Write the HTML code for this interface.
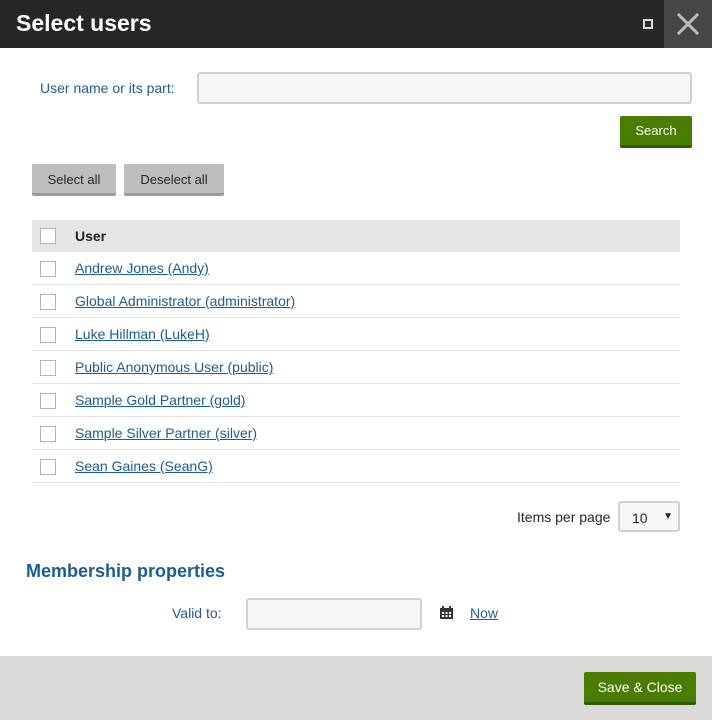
<!DOCTYPE html>
<html><head><style>
*{box-sizing:border-box;margin:0;padding:0}
body{width:712px;height:720px;position:relative;background:#fff;font-family:"Liberation Sans",sans-serif;font-size:14px;color:#262524;overflow:hidden}
.a{position:absolute}
.hdr{left:0;top:0;width:712px;height:48px;background:#272624}
.btn{position:absolute;text-align:center;border-radius:2px;font-size:13px}
.g{background:#497c00;color:#fff;border-bottom:3px solid #345a00}
.gr{background:#bebdbd;color:#262524;border-bottom:3px solid #9a9a9a}
.cb{position:absolute;left:40px;width:16px;height:16px;border:1px solid #b5b5b5;background:#fff}
.row{position:absolute;left:32px;width:648px;height:33px;border-bottom:1px solid #e2e2e2}
.row a{position:absolute;left:43px;top:8px;color:#1d5c8e;text-decoration:underline}
.row .cb{left:8px;top:9px}
</style></head><body>
<div class="a hdr"></div>
<div class="a" style="left:16px;top:10px;color:#fff;font-size:23px;font-weight:bold">Select users</div>
<div class="a" style="left:643px;top:19px;width:10px;height:10px;border:2px solid #ddd"></div>
<div class="a" style="left:664px;top:0;width:48px;height:48px;background:#474646"></div>
<svg class="a" style="left:677px;top:13px" width="22" height="22"><path d="M1 1L21 21M21 1L1 21" stroke="#bbb" stroke-width="3"/></svg>
<div class="a" style="left:40px;top:80px;color:#1d5c8e">User name or its part:</div>
<div class="a" style="left:197px;top:72px;width:495px;height:32px;border:2px solid #d0d0d0;border-radius:3px;background:#f6f6f6"></div>
<div class="btn g" style="left:620px;top:116px;width:72px;height:32px;line-height:30px">Search</div>
<div class="btn gr" style="left:32px;top:164px;width:84px;height:32px;line-height:31px">Select all</div>
<div class="btn gr" style="left:124px;top:164px;width:100px;height:32px;line-height:31px">Deselect all</div>
<div class="a" style="left:32px;top:220px;width:648px;height:32px;background:#e5e5e5"></div>
<div class="cb" style="top:228px"></div>
<div class="a" style="left:75px;top:228px;font-weight:bold">User</div>
<div class="row" style="top:252px"><div class="cb"></div><a>Andrew Jones (Andy)</a></div>
<div class="row" style="top:285px"><div class="cb"></div><a>Global Administrator (administrator)</a></div>
<div class="row" style="top:318px"><div class="cb"></div><a>Luke Hillman (LukeH)</a></div>
<div class="row" style="top:351px"><div class="cb"></div><a>Public Anonymous User (public)</a></div>
<div class="row" style="top:384px"><div class="cb"></div><a>Sample Gold Partner (gold)</a></div>
<div class="row" style="top:417px"><div class="cb"></div><a>Sample Silver Partner (silver)</a></div>
<div class="row" style="top:450px"><div class="cb"></div><a>Sean Gaines (SeanG)</a></div>
<div class="a" style="left:517px;top:509px">Items per page</div>
<div class="a" style="left:618px;top:501px;width:62px;height:31px;border:2px solid #d0d0d0;border-radius:3px;background:#f6f6f6;padding:7px 0 0 12px">10<span style="position:absolute;right:5px;top:8px;font-size:10px">▼</span></div>
<div class="a" style="left:26px;top:561px;font-size:18px;font-weight:bold;color:#1d5c8e">Membership properties</div>
<div class="a" style="left:172px;top:605px;color:#1d5c8e">Valid to:</div>
<div class="a" style="left:246px;top:598px;width:176px;height:32px;border:2px solid #d0d0d0;border-radius:3px;background:#f6f6f6"></div>
<svg class="a" style="left:439px;top:605px" width="15" height="15"><rect x="1" y="3" width="13" height="11" fill="#333"/><rect x="3" y="1" width="2" height="3" fill="#333"/><rect x="10" y="1" width="2" height="3" fill="#333"/><g fill="#fff"><rect x="3" y="7" width="2" height="2"/><rect x="6.5" y="7" width="2" height="2"/><rect x="10" y="7" width="2" height="2"/><rect x="3" y="10" width="2" height="2"/><rect x="6.5" y="10" width="2" height="2"/><rect x="10" y="10" width="2" height="2"/></g></svg>
<div class="a" style="left:470px;top:605px;color:#1d5c8e;text-decoration:underline">Now</div>
<div class="a" style="left:0;top:656px;width:712px;height:64px;background:#d9dad8"></div>
<div class="btn g" style="left:584px;top:672px;width:112px;height:33px;line-height:31px;font-size:14px">Save &amp; Close</div>
</body></html>
